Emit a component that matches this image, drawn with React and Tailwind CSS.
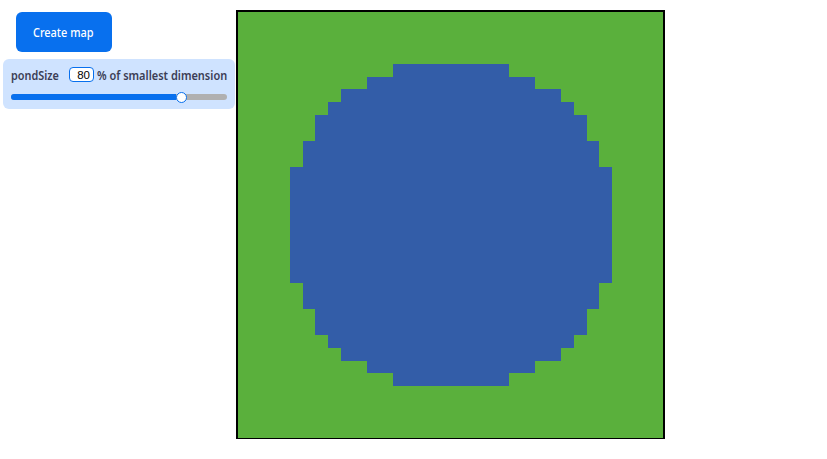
const pondRows = [
  [13, 116], [12, 168], [13, 220], [13, 246], [26, 272], [26, 296], [116, 322],
  [26, 296], [26, 272], [13, 246], [13, 220], [12, 168], [13, 116],
];

function Controls() {
  return (
    <div className="w-[232px] pt-3">
      <button className="ml-[13px] block h-10 w-24 rounded-md bg-[#0870ee] pt-0.5 pr-px text-[12px] font-medium whitespace-nowrap text-white">
        <span className="inline-block origin-center scale-x-[0.91]">Create map</span>
      </button>
      <div className="mt-[7px] h-[50px] rounded-md bg-[#cfe3ff] px-2 pt-2">
        <div className="flex h-[15px] items-center text-[12px] font-semibold whitespace-nowrap text-[#3b3d55]">
          <span className="w-[58px] shrink-0 pt-0.5">
            <span className="inline-block origin-left scale-x-[0.905]">pondSize</span>
          </span>
          <span className="h-[15px] w-[25px] shrink-0 rounded-[4px] border border-[#0870ee] bg-white pr-[3px] text-right font-['Liberation_Sans'] text-[11.5px] leading-[14px] font-normal text-black">
            80
          </span>
          <span className="ml-[3px] shrink-0 origin-left scale-x-[0.915] pt-0.5">% of smallest dimension</span>
        </div>
        <div className="mt-3 flex h-1.5 items-center rounded-full bg-[#b0b0b0]">
          <div className="h-1.5 w-[165px] rounded-l-full bg-[#0870ee]" />
          <div className="size-[11px] rounded-full border border-[#0870ee] bg-white" />
        </div>
      </div>
    </div>
  );
}

export default function App() {
  return (
    <main className="flex h-[459px] w-[827px] overflow-hidden bg-white pl-[3px] font-['Noto_Sans',sans-serif]">
      <Controls />
      <div className="mt-2.5 ml-px flex h-[429px] w-[429px] flex-col items-start border-2 border-b border-black bg-[#5ab03c] pt-[52px]">
        <div className="ml-[52px] flex w-[322px] flex-col items-center">
          {pondRows.map(([height, width], i) => (
            <div key={i} className="shrink-0 bg-[#335da8]" style={{ height, width }} />
          ))}
        </div>
      </div>
    </main>
  );
}
